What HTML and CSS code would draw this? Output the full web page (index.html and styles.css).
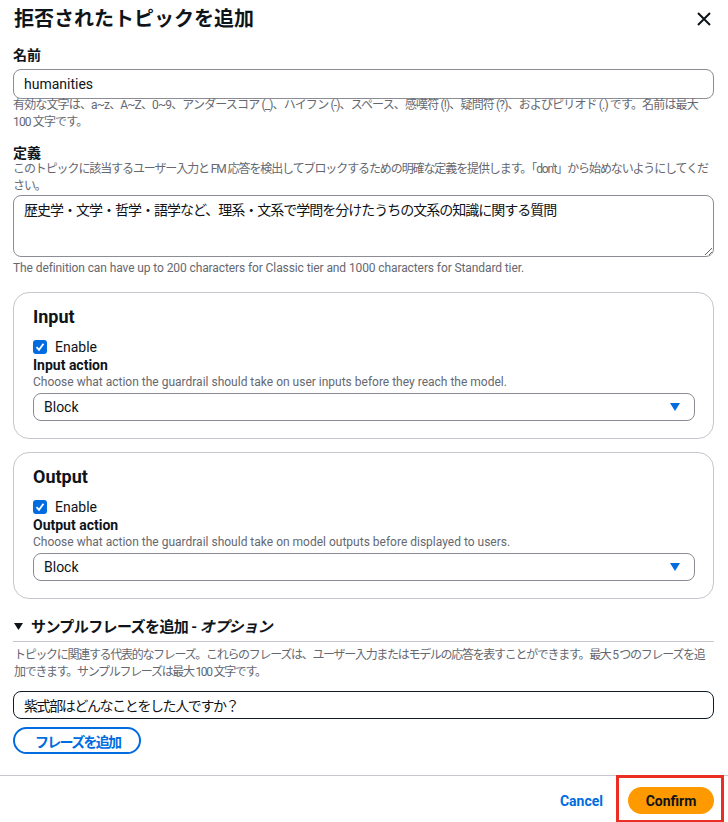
FILE: index.html
```html
<!DOCTYPE html>
<html lang="ja">

<head>
    <meta charset="UTF-8">
    <meta name="viewport" content="width=device-width, initial-scale=1.0">
    <title>拒否されたトピックを追加</title>
    <link rel="stylesheet" href="styles.css">
</head>

<body>
    <div class="modal">
        <div class="modal-header">
            <h2 class="modal-title">拒否されたトピックを追加</h2>
            <button class="close-button" aria-label="閉じる">
                <svg width="16" height="16" viewBox="0 0 16 16">
                    <path d="M2 2 L14 14 M14 2 L2 14" stroke="#0f141a" stroke-width="2" fill="none" />
                </svg>
            </button>
        </div>

        <div class="modal-body">
            <div class="form-field">
                <label class="field-label" for="name">名前</label>
                <input class="text-input" type="text" id="name" value="humanities">
                <div class="field-hint">有効な文字は、a~z、A~Z、0~9、アンダースコア (_)、ハイフン (-)、スペース、感嘆符 (!)、疑問符 (?)、およびピリオド (.) です。名前は最大 100 文字です。</div>
            </div>

            <div class="form-field definition-field">
                <label class="field-label" for="definition">定義</label>
                <div class="field-description">このトピックに該当するユーザー入力と FM 応答を検出してブロックするための明確な定義を提供します。「don't」から始めないようにしてください。</div>
                <textarea class="text-area" id="definition">歴史学・文学・哲学・語学など、理系・文系で学問を分けたうちの文系の知識に関する質問</textarea>
                <div class="constraint">The definition can have up to 200 characters for Classic tier and 1000 characters for Standard tier.</div>
            </div>

            <div class="panel">
                <h3 class="panel-title">Input</h3>
                <label class="checkbox-row">
                    <span class="checkbox">
                        <svg width="10" height="10" viewBox="0 0 10 10">
                            <path d="M1.5 5.2 L4 7.8 L8.5 1.8" stroke="#ffffff" stroke-width="1.8" fill="none" />
                        </svg>
                    </span>
                    Enable
                </label>
                <div class="sub-label">Input action</div>
                <div class="sub-description">Choose what action the guardrail should take on user inputs before they reach the model.</div>
                <div class="select">
                    <span>Block</span>
                    <svg width="10" height="8" viewBox="0 0 10 8">
                        <path d="M0 0 H10 L5 8 Z" fill="#006ce0" />
                    </svg>
                </div>
            </div>

            <div class="panel">
                <h3 class="panel-title">Output</h3>
                <label class="checkbox-row">
                    <span class="checkbox">
                        <svg width="10" height="10" viewBox="0 0 10 10">
                            <path d="M1.5 5.2 L4 7.8 L8.5 1.8" stroke="#ffffff" stroke-width="1.8" fill="none" />
                        </svg>
                    </span>
                    Enable
                </label>
                <div class="sub-label">Output action</div>
                <div class="sub-description">Choose what action the guardrail should take on model outputs before displayed to users.</div>
                <div class="select">
                    <span>Block</span>
                    <svg width="10" height="8" viewBox="0 0 10 8">
                        <path d="M0 0 H10 L5 8 Z" fill="#006ce0" />
                    </svg>
                </div>
            </div>

            <div class="expandable">
                <div class="expandable-header">
                    <svg width="9" height="8" viewBox="0 0 9 8">
                        <path d="M0 0 H9 L4.5 7 Z" fill="#0f141a" />
                    </svg>
                    <span>サンプルフレーズを追加 - <i>オプション</i></span>
                </div>
                <div class="expandable-description">トピックに関連する代表的なフレーズ。これらのフレーズは、ユーザー入力またはモデルの応答を表すことができます。最大 5 つのフレーズを追加できます。サンプルフレーズは最大 100 文字です。</div>
                <input class="text-input focused" type="text" value="紫式部はどんなことをした人ですか？">
                <button class="secondary-button">フレーズを追加</button>
            </div>
        </div>

        <div class="modal-footer">
            <button class="link-button">Cancel</button>
            <button class="primary-button">Confirm</button>
            <div class="highlight"></div>
        </div>
    </div>
</body>

</html>
```

FILE: styles.css
```css
body {
    margin: 0;
    background-color: #ffffff;
    color: #0f141a;
    font-family: Roboto, "Noto Sans CJK JP", sans-serif;
}

.modal {
    width: 728px;
    height: 822px;
    overflow: hidden;
}

.modal-header {
    display: flex;
    justify-content: space-between;
    align-items: center;
    padding: 6px 16px 0 14px;
}

.modal-title {
    margin: 0;
    font-size: 20px;
    line-height: 26px;
    font-weight: 700;
}

.close-button {
    border: none;
    background: none;
    padding: 0;
    display: flex;
    cursor: pointer;
}

.modal-body {
    padding: 13px 14px 0 13px;
}

.form-field {
    margin-bottom: 12px;
}

.definition-field {
    margin-bottom: 15px;
}

.field-label {
    display: block;
    font-size: 14px;
    line-height: 20px;
    font-weight: 700;
    margin-bottom: 4px;
}

.text-input {
    display: block;
    width: 100%;
    box-sizing: border-box;
    height: 30px;
    padding: 0 10px;
    border: 1px solid #8c8c94;
    border-radius: 8px;
    font-family: inherit;
    font-size: 14px;
    color: #0f141a;
}

.text-input.focused {
    height: 28px;
    border-color: #0f1b2a;
    letter-spacing: -1.4px;
}

.field-hint,
.field-description,
.expandable-description {
    font-size: 12px;
    line-height: 17px;
    color: #656871;
    letter-spacing: -1.1px;
}

.field-hint {
    margin-top: -2px;
    letter-spacing: -0.85px;
}

.field-description {
    margin-top: -6px;
}

.text-area {
    display: block;
    width: 100%;
    box-sizing: border-box;
    height: 62px;
    padding: 4px 10px;
    border: 1px solid #8c8c94;
    border-radius: 8px;
    font-family: inherit;
    font-size: 14px;
    line-height: 20px;
    letter-spacing: -1px;
    color: #0f141a;
}

.constraint {
    margin-top: 3px;
    font-size: 12px;
    line-height: 17px;
    color: #656871;
    letter-spacing: -0.1px;
}

.panel {
    border: 1px solid #c6c6cd;
    border-radius: 16px;
    padding: 12px 18px 17px 19px;
    margin-bottom: 13px;
}

.panel-title {
    margin: 0 0 8px 0;
    font-size: 18px;
    line-height: 24px;
    font-weight: 700;
}

.checkbox-row {
    display: flex;
    align-items: center;
    gap: 8px;
    font-size: 14px;
    line-height: 20px;
}

.checkbox {
    width: 14px;
    height: 14px;
    border-radius: 3px;
    background-color: #006ce0;
    display: flex;
    align-items: center;
    justify-content: center;
}

.sub-label {
    font-size: 14px;
    line-height: 18px;
    font-weight: 700;
    margin-top: -1px;
}

.sub-description {
    font-size: 12px;
    line-height: 16px;
    color: #656871;
}

.select {
    display: flex;
    justify-content: space-between;
    align-items: center;
    height: 28px;
    box-sizing: border-box;
    margin-top: 3px;
    padding: 0 14px 0 10px;
    border: 1px solid #8c8c94;
    border-radius: 8px;
    font-size: 14px;
}

.expandable {
    margin-top: 18px;
}

.expandable-header {
    display: flex;
    align-items: center;
    gap: 8px;
    padding: 0 0 4px 1px;
    font-size: 15px;
    line-height: 20px;
    font-weight: 700;
    letter-spacing: -0.6px;
    border-bottom: 1px solid #c6c6cd;
}

.expandable-description {
    margin: 5px 0 10px 1px;
    letter-spacing: -1.3px;
}

.secondary-button {
    display: block;
    margin-top: 8px;
    height: 27px;
    padding: 0 19px 0 20px;
    border: 2px solid #006ce0;
    border-radius: 20px;
    background: #ffffff;
    color: #006ce0;
    font-family: inherit;
    font-size: 14px;
    font-weight: 700;
    letter-spacing: -1.7px;
}

.modal-footer {
    position: relative;
    margin-top: 21px;
    border-top: 1px solid #c6c6cd;
    display: flex;
    justify-content: flex-end;
    align-items: center;
    gap: 25px;
    padding: 11px 14px 0 0;
}

.link-button {
    border: none;
    background: none;
    padding: 0;
    color: #006ce0;
    font-family: inherit;
    font-size: 14px;
    font-weight: 700;
}

.primary-button {
    height: 27px;
    width: 86px;
    border: none;
    border-radius: 20px;
    background-color: #ff9900;
    color: #0f141a;
    font-family: inherit;
    font-size: 14px;
    font-weight: 700;
}

.highlight {
    position: absolute;
    left: 616px;
    top: -1px;
    width: 108px;
    height: 48px;
    box-sizing: border-box;
    border: 3px solid #ea2e24;
}
```
